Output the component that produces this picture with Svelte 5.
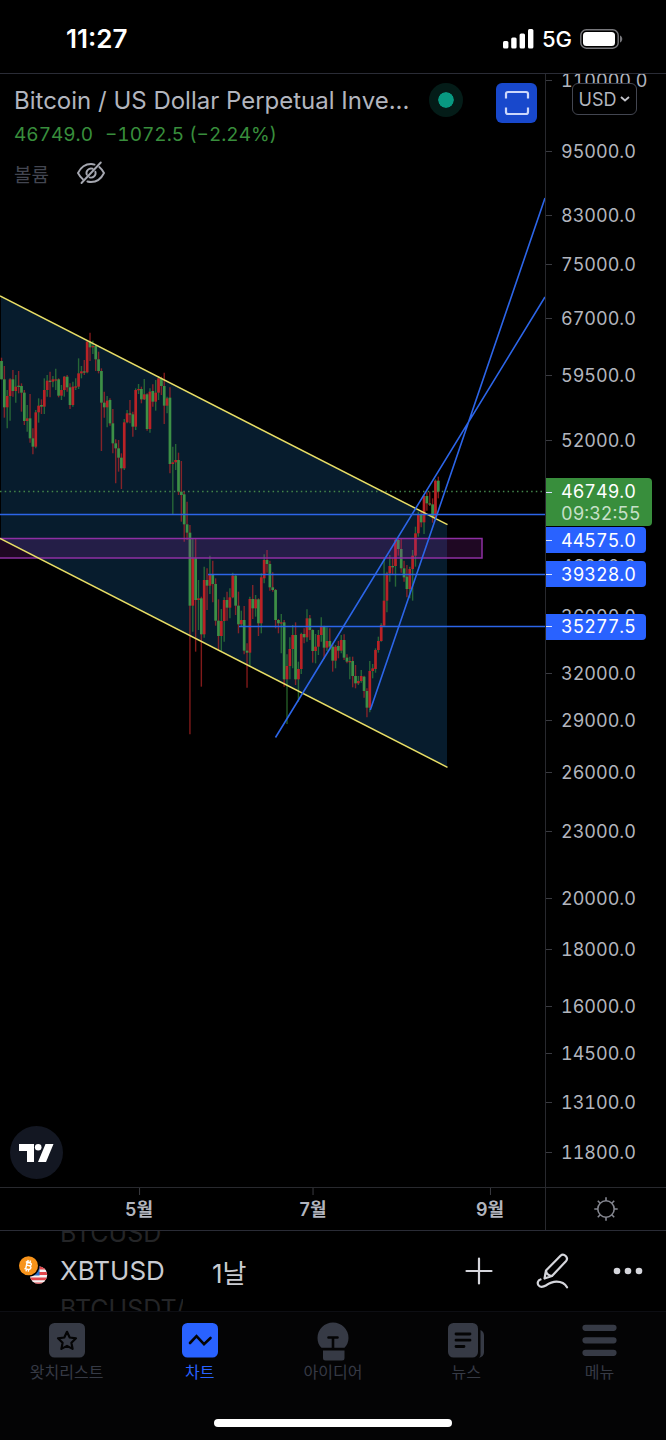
<script>
  // Plot space: one unit is one pixel at the default width of the pane.
  const TOP = 74;
  const HEIGHT = 1113;
  const WIDTH = 545;

  // Logarithmic price scale.
  const yOf = (price) => 151 + 480 * Math.log(95000 / price);
  const pct = (y) => `${((y - TOP) / HEIGHT) * 100}%`;

  const ticks = [
    110000, 95000, 83000, 75000, 67000, 59500, 52000, 40000, 36000, 32000, 29000,
    26000, 23000, 20000, 18000, 16000, 14500, 13100, 11800
  ];

  const tags = [
    { text: '44575.0', y: 540 },
    { text: '39328.0', y: 574.5 },
    { text: '35277.5', y: 626.5 }
  ];

  // Daily candles: open, close, high, low, in thirds of a unit below each band's top.
  const bands = [
    { top: 290, rows: [
      [213,268,203,268],[268,352,228,383],[352,318,300,415],[318,268,265,392],[268,303,240,320],
      [303,290,255,338],[287,290,243,310],[288,308,280,365],[308,393,300,405],[393,385,345,425],
      [385,445,312,458],[445,470,415,493],[470,367,360,475],[367,347,325,398],[345,350,328,372],
      [350,300,265,372],[300,272,255,320],[272,275,245,322],[275,268,258,292],[270,268,236,300],
      [268,317,265,322],[317,300,285,330],[300,260,258,320],[260,292,255,305],[292,345,280,357],
      [345,290,275,350],[292,289,265,300],[290,250,205,297],[250,244,228,265],[244,247,210,255],
      [247,155,150,250],[155,172,128,213],[172,168,152,192],[168,208,165,243],[208,243,185,250],
      [243,338,235,483],[338,352,305,383],[352,332,318,412],[330,400,325,407],[400,460,357,490],
      [460,475,448,580],[475,503,450,545],[503,535,490,597],[535,397,387,540],[397,370,360,400],
      [370,373,330,400],[373,410,365,440],[410,300,295,420],[300,297,282,312],[297,328,290,340],
      [328,313,267,330],[313,417,310,422],[417,305,295,428],[303,335,283,350],[335,308,270,362],
      [308,265,258,330],[265,288,260,315],[288,347,248,402],[347,325,320,370],[323,522,292,550],
      [522,517,470,672],[517,510,462,540],[510,605,488,615],[605,615,513,695]
    ] },
    { top: 540, rows: [
      [-137,-47,-145,5],[-47,-22,-115,0],[-22,197,-45,583],[197,55,-5,275],[55,180,-3,335],
      [180,175,120,270],[175,283,170,440],[283,120,80,293],[120,137,85,210],[137,105,47,162],
      [105,132,62,187],[132,242,115,257],[242,288,178,330],[288,243,207,333],[243,180,172,305],
      [180,203,155,242],[203,172,145,235],[172,107,98,175],[107,197,105,225],[197,253,155,280],
      [253,240,212,258],[240,332,198,343],[332,338,310,443],[338,177,170,378],[177,205,135,237],
      [205,178,165,230],[178,250,175,288],[250,112,100,280],[115,60,43,130],[60,72,30,98],
      [72,142,62,152],[142,150,97,155],[150,240,147,265],[240,250,237,280],[250,247,222,340],
      [247,418,240,440],[418,378,343,552],[378,327,292,418],[327,285,255,385],[285,418,247,435],
      [418,387,365,485],[387,282,278,402],[282,292,265,310],[292,235,208,305],[235,270,225,300],
      [270,333,268,368],[333,320,282,370],[320,285,270,345],[285,260,232,305],[260,323,257,357],
      [323,303,262,333],[303,320,265,330],[320,362,310,395],[362,320,315,385],[318,332,303,355],
      [332,300,285,340],[300,353,283,360]
    ] },
    { top: 460, rows: [
      [593,605,583,610],[605,603,590,658],[603,648,590,682],[648,670,615,685],[670,663,648,675],
      [663,648,630,668],[650,693,647,713],[693,743,685,772],[743,633,603,757],[633,625,612,655],
      [627,570,565,638],[570,543,530,578],[543,495,490,545],[497,422,295,500],[422,340,335,457],
      [340,318,285,365],[318,320,295,345],[318,240,235,380],[240,267,237,287],[267,325,235,338],
      [325,352,302,365],[350,387,315,412],[387,327,320,415],[327,287,270,422],[287,220,200,320],
      [220,163,155,230],[163,187,155,202],[187,108,105,222],[108,130,97,152],[130,133,95,138],
      [133,172,115,188],[172,62,58,180],[62,95,50,115]
    ] }
  ];

  const candles = bands
    .flatMap((b) => b.rows.map((r) => r.map((v) => b.top + v / 3)))
    .map(([open, close, high, low], i) => ({
      x: 1.5 + 2.855 * i,
      y: Math.min(open, close),
      h: Math.max(1.3, Math.abs(open - close)),
      high,
      low,
      rise: close < open
    }));

  const months = [
    { label: '5월', x: 139 },
    { label: '7월', x: 313 },
    { label: '9월', x: 490 }
  ];
</script>

<div class="app">
  <header class="status">
    <time>11:27</time>
    <div class="signals">
      <svg width="31" height="20" viewBox="0 0 31 20" aria-hidden="true">
        <g fill="#fff">
          <rect x="0" y="12" width="5.4" height="7.5" rx="1.5" />
          <rect x="8.2" y="8.5" width="5.4" height="11" rx="1.5" />
          <rect x="16.6" y="4.5" width="5.4" height="15" rx="1.5" />
          <rect x="25" y="0" width="5.4" height="19.5" rx="1.5" />
        </g>
      </svg>
      <span>5G</span>
      <svg width="43" height="20" viewBox="0 0 43 20" aria-hidden="true">
        <rect x="0.8" y="0.8" width="37.4" height="18.4" rx="5.5" fill="none" stroke="#77777b" stroke-width="1.4" />
        <rect x="3" y="3" width="32" height="14" rx="3.5" fill="#fff" />
        <path d="M40 6.5c3 1.2 3 5.800 0 7z" fill="#77777b" />
      </svg>
    </div>
  </header>

  <main class="chart">
    <section class="pane">
      <svg class="plot" viewBox="0 {TOP} {WIDTH} {HEIGHT}" role="img" aria-label="XBTUSD">
        <path d="M1 296.500L447 524.500V767L1 539z" fill="#071c2d" />
        <path d="M0 491.500H545" stroke="#43854a" stroke-width="1.400" stroke-dasharray="1.500 3.200" />
        {#each candles as c}
          <path d="M{c.x} {c.high}V{c.low}" stroke={c.rise ? '#388e3c' : '#c62828'} stroke-width="1.400" opacity="0.650" />
        {/each}
        {#each candles as c}
          <rect x={c.x - 1.35} y={c.y} width="2.700" height={c.h} fill={c.rise ? '#b92226' : '#3c9046'} />
        {/each}
        <rect x="-4" y="538.500" width="486" height="19.500" fill="#9c27b0" fill-opacity="0.200" stroke="#8e2fa3" stroke-width="1.500" />
        <g fill="none" stroke="#e8de66" stroke-width="1.500">
          <path d="M0 296L447.500 524.700" />
          <path d="M0 538.500L447.500 767.300" />
        </g>
        <g fill="none" stroke="#2c65e8" stroke-width="1.600">
          <path d="M0 514.500H545M208 574.500H545M239 626.500H545" />
          <path d="M275.500 737.500L545 297M370.300 710L545 198" />
        </g>
      </svg>

      <div class="legend">
        <div class="title">
          <h1>Bitcoin / US Dollar Perpetual Inve...</h1>
          <i class="live"></i>
        </div>
        <p class="quote"><span>46749.0</span><span>−1072.5 (−2.24%)</span></p>
        <div class="study">
          <span>볼륨</span>
          <button aria-label="볼륨">
            <svg width="28" height="24" viewBox="0 0 28 24" fill="none" stroke="#a5a7b0" stroke-width="1.900" stroke-linecap="round" aria-hidden="true">
              <path d="M17.500 3.600C16.400 3.200 15.200 3 14 3 7.500 3 3.200 7.500 1 12c1.300 2.500 2.900 4.600 4.900 6.200M22.300 6C24.300 7.600 25.800 9.700 27 12c-2.200 4.500-6.500 9-13 9-1.300 0-2.500-.2-3.600-.5" />
              <path d="M15.500 7.700a4.600 4.600 0 0 0-5.800 5.800M18.400 10.700a4.600 4.600 0 0 1-5.800 5.700M4.500 22L23.800 1.500" />
            </svg>
          </button>
        </div>
      </div>

      <button class="expand" aria-label="전체 화면">
        <svg width="26" height="26" viewBox="0 0 26 26" fill="none" stroke="#ccd7fb" stroke-width="2.200" aria-hidden="true">
          <path d="M2 8.500V4a2 2 0 0 1 2-2h18a2 2 0 0 1 2 2v4.500M2 17.500V22a2 2 0 0 0 2 2h18a2 2 0 0 0 2-2v-4.500" />
        </svg>
      </button>

      <a class="brand" href="#chart" aria-label="TradingView">
        <svg width="35" height="18" viewBox="0 0 35 18" fill="#fff" aria-hidden="true">
          <path d="M0 0h15v18H8V7H0z" />
          <circle cx="19.200" cy="3.300" r="3.300" />
          <path d="M26.500 0H34.500L27 18H19z" />
        </svg>
      </a>
    </section>

    <aside class="scale">
      {#each ticks as t}
        <span class="tick" style:top={pct(yOf(t))}>{t.toFixed(1)}</span>
      {/each}
      {#each tags as t}
        <span class="tick tag" style:top={pct(t.y)}>{t.text}</span>
      {/each}
      <div class="last" style:top={pct(478)}>
        <strong>46749.0</strong>
        <span>09:32:55</span>
      </div>
      <button class="currency">
        USD
        <svg width="10" height="6" viewBox="0 0 10 6" fill="none" stroke="#c4c5cb" stroke-width="1.800" aria-hidden="true"><path d="M1 1l4 3.500L9 1" /></svg>
      </button>
    </aside>
  </main>

  <div class="timeline">
    <div class="months">
      {#each months as m}
        <span style:left="{(m.x / WIDTH) * 100}%">{m.label}</span>
      {/each}
    </div>
    <button class="gear" aria-label="설정">
      <svg width="24" height="24" viewBox="0 0 24 24" fill="none" stroke="#84868f" stroke-width="1.600" aria-hidden="true">
        <circle cx="12" cy="12" r="8.200" />
        <path d="M12 .3v3.500M12 20.200v3.500M.3 12h3.500M20.200 12h3.500M3.800 3.800l2.400 2.400M17.800 17.800l2.400 2.400M3.800 20.200l2.400-2.400M17.800 6.200l2.400-2.400" />
      </svg>
    </button>
  </div>

  <div class="toolbar">
    <svg class="coins" width="30" height="30" viewBox="0 0 30 30" aria-hidden="true">
      <defs><clipPath id="flag"><circle cx="19.500" cy="19" r="8.700" /></clipPath></defs>
      <g clip-path="url(#flag)">
        <path fill="#f4f2f3" d="M10 10h20v20H10z" />
        <path fill="#e0474c" d="M10 10h20v3.500H10zM10 16h20v3H10zM10 21.500h20v2.800H10zM10 26.500h20v3H10z" />
        <path fill="#2b6fc8" d="M10 10h10.500v9.500H10z" />
      </g>
      <circle cx="9.500" cy="9.700" r="11" fill="#000" />
      <circle cx="9.500" cy="9.700" r="9.500" fill="#f7931a" />
      <path d="M8.200 6l-1.600 7.200M6.800 5.800l3.800.9c2.600.6 2.100 3.500-.9 2.900l-2-.5M9.700 9.600c3.400.8 2.600 4.300-.6 3.800L5.400 12.600M9.200 4l-.5 2.200M11.500 4.500L11 6.700M7.500 13.300L7 15.300M9.700 13.600l-.4 2.100" fill="none" stroke="#fff" stroke-width="1.400" />
    </svg>
    <div class="wheel">
      <span class="dim">BTCUSD</span>
      <span>XBTUSD</span>
      <span class="dim">BTCUSDT/</span>
    </div>
    <button class="interval">1날</button>
    <div class="actions">
      <button aria-label="추가">
        <svg width="28" height="28" viewBox="0 0 28 28" stroke="#d5d6dc" stroke-width="2.200" stroke-linecap="round" aria-hidden="true"><path d="M14 1.500v25M1.500 14h25" /></svg>
      </button>
      <button aria-label="그리기">
        <svg width="34" height="36" viewBox="0 0 34 36" fill="none" stroke="#d5d6dc" stroke-width="2.200" stroke-linecap="round" stroke-linejoin="round" aria-hidden="true">
          <path d="M10 17.500L24.500 2.700c1.500-1.400 3.700-1.200 5.200.3s1.600 3.600.2 5.200L16 23l-7.500 2.500zM10 17.500c.2 3 2.500 5 6 5.500M4.500 26.500c-2.600.8-3.400 3.500-2.200 5.500 1.500 2.500 4.800 2.200 7.500.5 3-2 6.500-3.800 10.700-3.800 5 0 8.500 2 10.500 5.600" />
        </svg>
      </button>
      <button aria-label="더보기">
        <svg width="30" height="8" viewBox="0 0 30 8" fill="#d5d6dc" aria-hidden="true"><circle cx="4" cy="4" r="3.300" /><circle cx="15" cy="4" r="3.300" /><circle cx="26" cy="4" r="3.300" /></svg>
      </button>
    </div>
  </div>

  <footer class="dock">
    <nav>
      <a href="#watchlist">
        <svg width="36" height="40" viewBox="0 0 36 40" aria-hidden="true">
          <rect y="2" width="36" height="34.500" rx="5.500" fill="#363a45" />
          <path d="M18 10.800l2.700 5.700 6.300.8-4.600 4.400 1.200 6.200-5.600-3-5.600 3 1.200-6.200L9 17.300l6.300-.8z" fill="none" stroke="#040405" stroke-width="2.200" stroke-linejoin="round" />
        </svg>
        왓치리스트
      </a>
      <a href="#chart" class="active">
        <svg width="36" height="40" viewBox="0 0 36 40" aria-hidden="true">
          <rect y="2" width="36" height="34.500" rx="5.500" fill="#2962ff" />
          <path d="M8 22l6.500-6.800 7.500 8L28.500 17" fill="none" stroke="#040405" stroke-width="2.600" stroke-linecap="round" />
        </svg>
        차트
      </a>
      <a href="#ideas">
        <svg width="36" height="40" viewBox="0 0 36 40" aria-hidden="true">
          <path d="M6.500 26.800C3.800 24.300 2.500 21 2.500 17a15.500 15.500 0 1 1 31 0c0 4-1.500 7.300-4 9.800zM8 29.500h21.500V37a2.500 2.500 0 0 1-2.500 2.500H10.500A2.500 2.500 0 0 1 8 37z" fill="#363a45" />
          <path d="M13.500 16.500h9M18 16.500V27" stroke="#040405" stroke-width="2.600" stroke-linecap="round" />
        </svg>
        아이디어
      </a>
      <a href="#news">
        <svg width="36" height="40" viewBox="0 0 36 40" aria-hidden="true">
          <rect y="2" width="30" height="34.500" rx="5.500" fill="#363a45" />
          <path d="M32.500 9c2.500 1.200 3.500 3 3.500 5.500V31c0 3-2 5.500-5 5.500 1-.7 1.500-1.500 1.500-3z" fill="#363a45" />
          <path d="M8 13h14M8 19.200h14M8 25.500h8" stroke="#040405" stroke-width="2.800" stroke-linecap="round" />
        </svg>
        뉴스
      </a>
      <a href="#menu">
        <svg width="36" height="40" viewBox="0 0 36 40" aria-hidden="true">
          <path d="M4.500 6.800h28M4.500 19.300h28M4.500 31.800h28" stroke="#363a45" stroke-width="6.200" stroke-linecap="round" />
        </svg>
        메뉴
      </a>
    </nav>
    <div class="home"></div>
  </footer>
</div>

<style>
  :global(body) { margin: 0; background: #000; }
  .app {
    font-family: Inter, "Noto Sans CJK KR", sans-serif;
    color: #b2b5be;
    background: #000;
    min-height: 100vh;
    display: flex;
    flex-direction: column;
  }
  button { background: none; border: 0; padding: 0; margin: 0; color: inherit; font: inherit; cursor: pointer; }
  svg { display: block; flex: none; }
  a { color: inherit; text-decoration: none; }

  .status {
    display: flex;
    justify-content: space-between;
    align-items: center;
    height: 73px;
    box-sizing: border-box;
    padding: 4px 43px 0 66px;
    color: #fff;
    font-size: 26px;
    font-weight: 600;
  }
  .signals { display: flex; align-items: center; gap: 8px; font-size: 22px; font-weight: 500; }

  .chart { display: flex; border-top: 1px solid #2a2c36; }
  .pane { position: relative; flex: 1; min-width: 0; }
  .plot { width: 100%; height: auto; }

  .legend { position: absolute; top: 10px; left: 14px; }
  .title { display: flex; align-items: center; gap: 20px; height: 32px; }
  h1 { margin: 0; font-size: 24px; font-weight: 400; white-space: nowrap; }
  .live { width: 16px; height: 16px; border-radius: 50%; background: #089981; border: 9px solid #041c18; background-clip: padding-box; }
  .quote { margin: 0; display: flex; gap: 12px; font-size: 19px; line-height: 38px; color: #388e3c; font-variant-numeric: tabular-nums; }
  .study { display: flex; align-items: center; gap: 28px; height: 38px; font-size: 19px; color: #434651; }

  .expand {
    position: absolute;
    top: 9px;
    right: 8px;
    display: grid;
    place-items: center;
    width: 41px;
    height: 40px;
    border-radius: 6px;
    background: #1848cc;
  }
  .brand {
    position: absolute;
    left: 10px;
    bottom: 8px;
    display: grid;
    place-items: center;
    width: 53px;
    height: 53px;
    border-radius: 50%;
    background: #131722;
  }

  .scale {
    position: relative;
    overflow: hidden;
    width: 121px;
    box-sizing: border-box;
    border-left: 1px solid #28292e;
    font-size: 18px;
    font-variant-numeric: tabular-nums;
  }
  .tick {
    position: absolute;
    left: -1px;
    display: flex;
    align-items: center;
    gap: 9px;
    height: 26px;
    transform: translateY(-50%);
  }
  .tick::before, strong::before { content: ""; width: 7px; height: 1px; background: #3a3b41; }
  .tag { padding-right: 10px; border-radius: 0 4px 4px 0; background: #2962ff; color: #fff; }
  .tag::before, strong::before { background: #d5e0ff; }
  .last {
    position: absolute;
    left: -1px;
    display: flex;
    flex-direction: column;
    width: 107px;
    height: 48px;
    box-sizing: border-box;
    padding: 3px 0;
    border-radius: 0 4px 4px 0;
    background: #388e3c;
    line-height: 22px;
    color: #fff;
  }
  strong { display: flex; align-items: center; gap: 9px; font-weight: 400; }
  .last span { padding-left: 16px; color: #c6e0c8; }
  .currency {
    position: absolute;
    top: 9px;
    left: 26px;
    display: flex;
    align-items: center;
    justify-content: center;
    gap: 4px;
    width: 65px;
    height: 32px;
    border: 1px solid #434651;
    border-radius: 6px;
    background: #000;
  }

  .timeline { display: flex; height: 43px; border-top: 1px solid #28292e; box-sizing: border-box; }
  .months { position: relative; flex: 1; font-size: 18px; font-weight: 600; }
  .months span { position: absolute; top: 0; padding-top: 9px; line-height: 26px; transform: translateX(-50%); }
  .months span::before { content: ""; position: absolute; top: 0; left: 50%; width: 1px; height: 7px; background: #3a3b41; }
  .gear { display: grid; place-items: center; width: 121px; box-sizing: border-box; border-left: 1px solid #28292e; }

  .toolbar {
    display: flex;
    align-items: center;
    height: 82px;
    box-sizing: border-box;
    padding: 0 23px 0 19px;
    border-top: 1px solid #2a2c36;
    border-bottom: 1px solid #0d0e13;
    font-size: 26px;
    color: #c9cbd1;
  }
  .wheel {
    display: flex;
    flex-direction: column;
    justify-content: center;
    overflow: hidden;
    width: 123px;
    height: 80px;
    margin: 0 29px 0 11px;
    line-height: 38px;
  }
  .dim { flex: none; font-size: 25px; color: #242527; }
  .actions { display: flex; align-items: center; gap: 43px; margin-left: auto; }

  .dock { flex: 1; background: #040405; }
  nav { display: grid; grid-template-columns: repeat(5, 1fr); padding-top: 9px; }
  nav a {
    display: flex;
    flex-direction: column;
    align-items: center;
    font-size: 16px;
    line-height: 22px;
    color: #363a45;
  }
  nav .active { color: #2962ff; }
  .home { width: 238px; height: 8px; margin: 36px auto 13px; border-radius: 4px; background: #fff; }
</style>
